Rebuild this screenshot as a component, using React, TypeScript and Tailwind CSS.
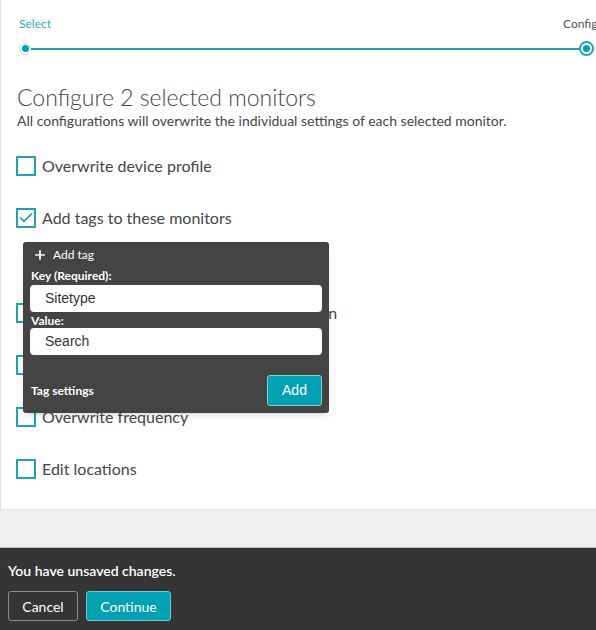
import { Plus, Check } from "lucide-react";

const rows = [
  { label: "Overwrite device profile", checked: false },
  { label: "Add tags to these monitors", checked: true },
  { label: "Overwrite Visually complete configuration", checked: false },
  { label: "Overwrite bandwidth throttling", checked: false },
  { label: "Overwrite frequency", checked: false },
  { label: "Edit locations", checked: false },
];

function Checkbox({ checked }: { checked: boolean }) {
  return (
    <span className="w-[20px] h-[20px] shrink-0 border-2 border-[#1fa4b4] bg-white flex items-center justify-center">
      {checked && <Check size={16} strokeWidth={2.5} className="text-[#1a9fb0]" />}
    </span>
  );
}

function TagPopup() {
  return (
    <div className="absolute left-[22px] top-[242px] w-[306px] h-[171px] bg-[#444444] rounded-[3px] shadow-md px-[7px] text-white font-['Lato',sans-serif]">
      <div className="flex items-center gap-[6px] pl-[3px] pt-[5px] h-[21px] text-[12px]">
        <Plus size={14} strokeWidth={3} />
        <span>Add tag</span>
      </div>
      <div className="pl-[1px] mt-[3px] h-[19px] text-[12px] font-bold leading-[19px]">Key (Required):</div>
      <div className="h-[27px] bg-white rounded-[4px] flex items-center pl-[15px] text-[14px] text-[#333] font-['Liberation_Sans',sans-serif]">
        Sitetype
      </div>
      <div className="pl-[1px] mt-[1px] h-[15px] text-[12px] font-bold leading-[15px]">Value:</div>
      <div className="h-[27px] bg-white rounded-[4px] flex items-center pl-[15px] text-[14px] text-[#333] font-['Liberation_Sans',sans-serif]">
        Search
      </div>
      <div className="flex items-center justify-between mt-[20px]">
        <span className="pl-[1px] text-[12px] font-bold">Tag settings</span>
        <button className="w-[55px] h-[31px] bg-[#00a1b2] border border-[#7fd0d8] rounded-[3px] text-[14px] text-white font-['Liberation_Sans',sans-serif]">
          Add
        </button>
      </div>
    </div>
  );
}

export default function App() {
  return (
    <div className="w-[596px] h-[630px] flex flex-col bg-[#f0f0f0] overflow-hidden font-['Lato',sans-serif]">
      <div className="relative h-[510px] shrink-0 bg-white border-l border-b border-[#e3e3e3] overflow-hidden">
        {/* stepper */}
        <div className="ml-[18px] w-[640px] shrink-0 flex pt-[16px] text-[12px] leading-[16px] whitespace-nowrap">
          <span className="text-[#2bb0c0]">Select</span>
          <span className="ml-[512px] text-[#555]">Configure</span>
        </div>
        <div className="ml-[18px] w-[575px] flex items-center mt-[9px]">
          <span className="w-[12px] h-[12px] rounded-full border border-[#d6d6d6] bg-white flex items-center justify-center">
            <span className="w-[7px] h-[7px] rounded-full bg-[#00a1b2]" />
          </span>
          <span className="flex-1 h-[2px] bg-[#1fa4b4]" />
          <span className="w-[15px] h-[15px] rounded-full border-2 border-[#1fa4b4] bg-white flex items-center justify-center">
            <span className="w-[7px] h-[7px] rounded-full bg-[#00a1b2]" />
          </span>
        </div>

        <h1 className="ml-[16px] mt-[27px] text-[23px] leading-[28px] font-light text-[#454646]">
          Configure 2 selected monitors
        </h1>
        <p className="ml-[16px] mt-[1px] text-[14px] leading-[18px] text-[#454646]">
          All configurations will overwrite the individual settings of each selected monitor.
        </p>

        <div className="ml-[15px] mt-[26px] flex flex-col">
          {rows.map((row, i) => (
            <div
              key={i}
              className={`flex items-center gap-[6px] h-[20px] ${i === 0 ? "" : i === 2 ? "mt-[75px]" : "mt-[32px]"}`}
            >
              <Checkbox checked={row.checked} />
              <span className="text-[16px] text-[#454646]">{row.label}</span>
            </div>
          ))}
        </div>

        <TagPopup />
      </div>

      <div className="flex-1" />

      <div className="h-[83px] shrink-0 bg-[#353535] border-t border-[#c4c4c4] px-[8px] pt-[14px]">
        <div className="text-[14px] text-white font-semibold leading-[18px]">You have unsaved changes.</div>
        <div className="flex gap-[8px] mt-[11px]">
          <button className="w-[70px] h-[30px] border border-[#8c8c8c] rounded-[3px] text-[14px] text-white">
            Cancel
          </button>
          <button className="w-[85px] h-[30px] bg-[#00a1b2] border border-[#6ccbd5] rounded-[3px] text-[14px] text-white">
            Continue
          </button>
        </div>
      </div>
    </div>
  );
}
